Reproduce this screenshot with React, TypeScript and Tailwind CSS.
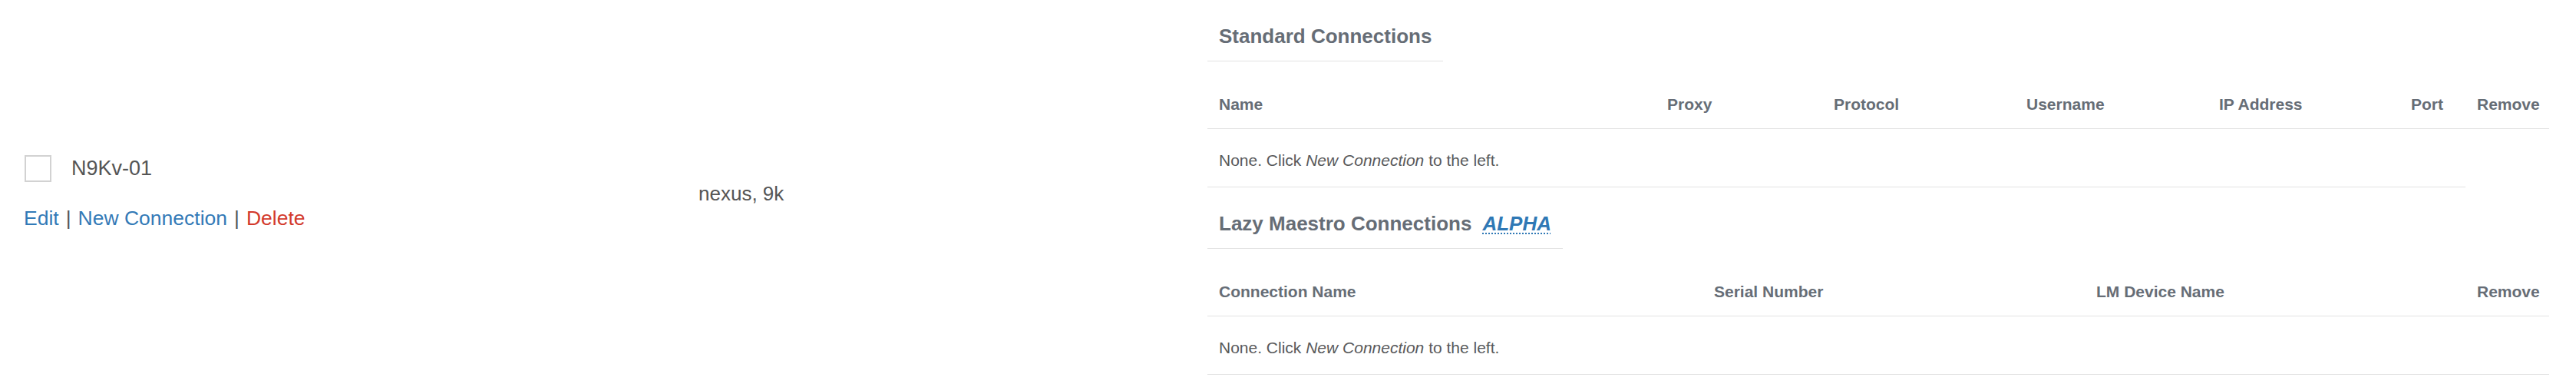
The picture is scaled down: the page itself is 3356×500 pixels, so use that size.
import React from "react";

// Column setup for the two connection tables
const standardCols = [
  { label: "Name", width: 584 },
  { label: "Proxy", width: 217 },
  { label: "Protocol", width: 251 },
  { label: "Username", width: 251 },
  { label: "IP Address", width: 250 },
  { label: "Port", width: 86 },
  { label: "Remove", width: 109 },
];

const lazyCols = [
  { label: "Connection Name", width: 645 },
  { label: "Serial Number", width: 498 },
  { label: "LM Device Name", width: 496 },
  { label: "Remove", width: 109 },
];

interface Col {
  label: string;
  width: number;
}

const EmptyText: React.FC = () => (
  <>
    None. Click <em>New Connection</em> to the left.
  </>
);

const ConnectionTable: React.FC<{ cols: Col[]; emptySpan: number }> = ({
  cols,
  emptySpan,
}) => {
  return (
    <table className="mt-[24px] w-[1748px] table-fixed border-collapse">
      <colgroup>
        {cols.map((c) => (
          <col key={c.label} style={{ width: c.width }} />
        ))}
      </colgroup>
      <thead>
        <tr>
          {cols.map((c) => (
            <th
              key={c.label}
              className="px-[15px] pt-[17px] pb-[16px] text-left text-[21px] leading-[30px] font-bold text-[#666d76] border-b border-[#e2e2e2]"
            >
              {c.label}
            </th>
          ))}
        </tr>
      </thead>
      <tbody>
        <tr>
          <td
            colSpan={emptySpan}
            className="px-[15px] pt-[26px] pb-[19px] text-[21px] leading-[30px] text-[#58595b] border-b border-[#e2e2e2]"
          >
            <EmptyText />
          </td>
        </tr>
      </tbody>
    </table>
  );
};

const SectionHeading: React.FC<{ children: React.ReactNode; className?: string }> = ({
  children,
  className = "",
}) => (
  <div
    className={`inline-block px-[15px] pb-[17px] text-[26px] leading-[30px] font-bold text-[#666d76] border-b border-[#e2e2e2] ${className}`}
  >
    {children}
  </div>
);

export default function App() {
  return (
    <main
      className="flex h-[500px] w-[3356px] items-center bg-white pl-[16px] pr-[20px]"
      style={{ fontFamily: '"Liberation Sans", Arial, sans-serif' }}
    >
      {/* device cell */}
      <div className="flex w-[879px] shrink-0 flex-col px-[15px] pt-[4px]">
        <div className="flex h-[35px] items-center gap-[26px]">
          <span className="ml-[1px] h-[35px] w-[35px] border-2 border-[#d2d2d2] bg-white" />
          <span className="text-[27px] leading-[35px] text-[#555]">N9Kv-01</span>
        </div>
        <div className="mt-[28px] text-[26.5px] leading-[38px] text-[#555]">
          <a className="text-[#337ab7]">Edit</a>
          <span className="mx-[9px]">|</span>
          <a className="text-[#337ab7]">New Connection</a>
          <span className="mx-[9px]">|</span>
          <a className="text-[#d33a2c]">Delete</a>
        </div>
      </div>

      {/* tags cell */}
      <div className="w-[663px] shrink-0 px-[15px] pt-[4px] text-[26px] leading-[36px] text-[#555]">
        nexus, 9k
      </div>

      {/* connections cell */}
      <div className="flex flex-1 flex-col items-start self-stretch px-[15px] pt-[32px]">
        <SectionHeading>Standard Connections</SectionHeading>
        <ConnectionTable cols={standardCols} emptySpan={6} />

        <SectionHeading className="mt-[32px]">
          Lazy Maestro Connections
          <abbr
            title="Alpha feature"
            className="ml-[14px] italic text-[#2f78b5] no-underline"
          >
            <span className="underline decoration-dotted decoration-2 underline-offset-[3px]">
              ALPHA
            </span>
          </abbr>
        </SectionHeading>
        <ConnectionTable cols={lazyCols} emptySpan={4} />
      </div>
    </main>
  );
}
